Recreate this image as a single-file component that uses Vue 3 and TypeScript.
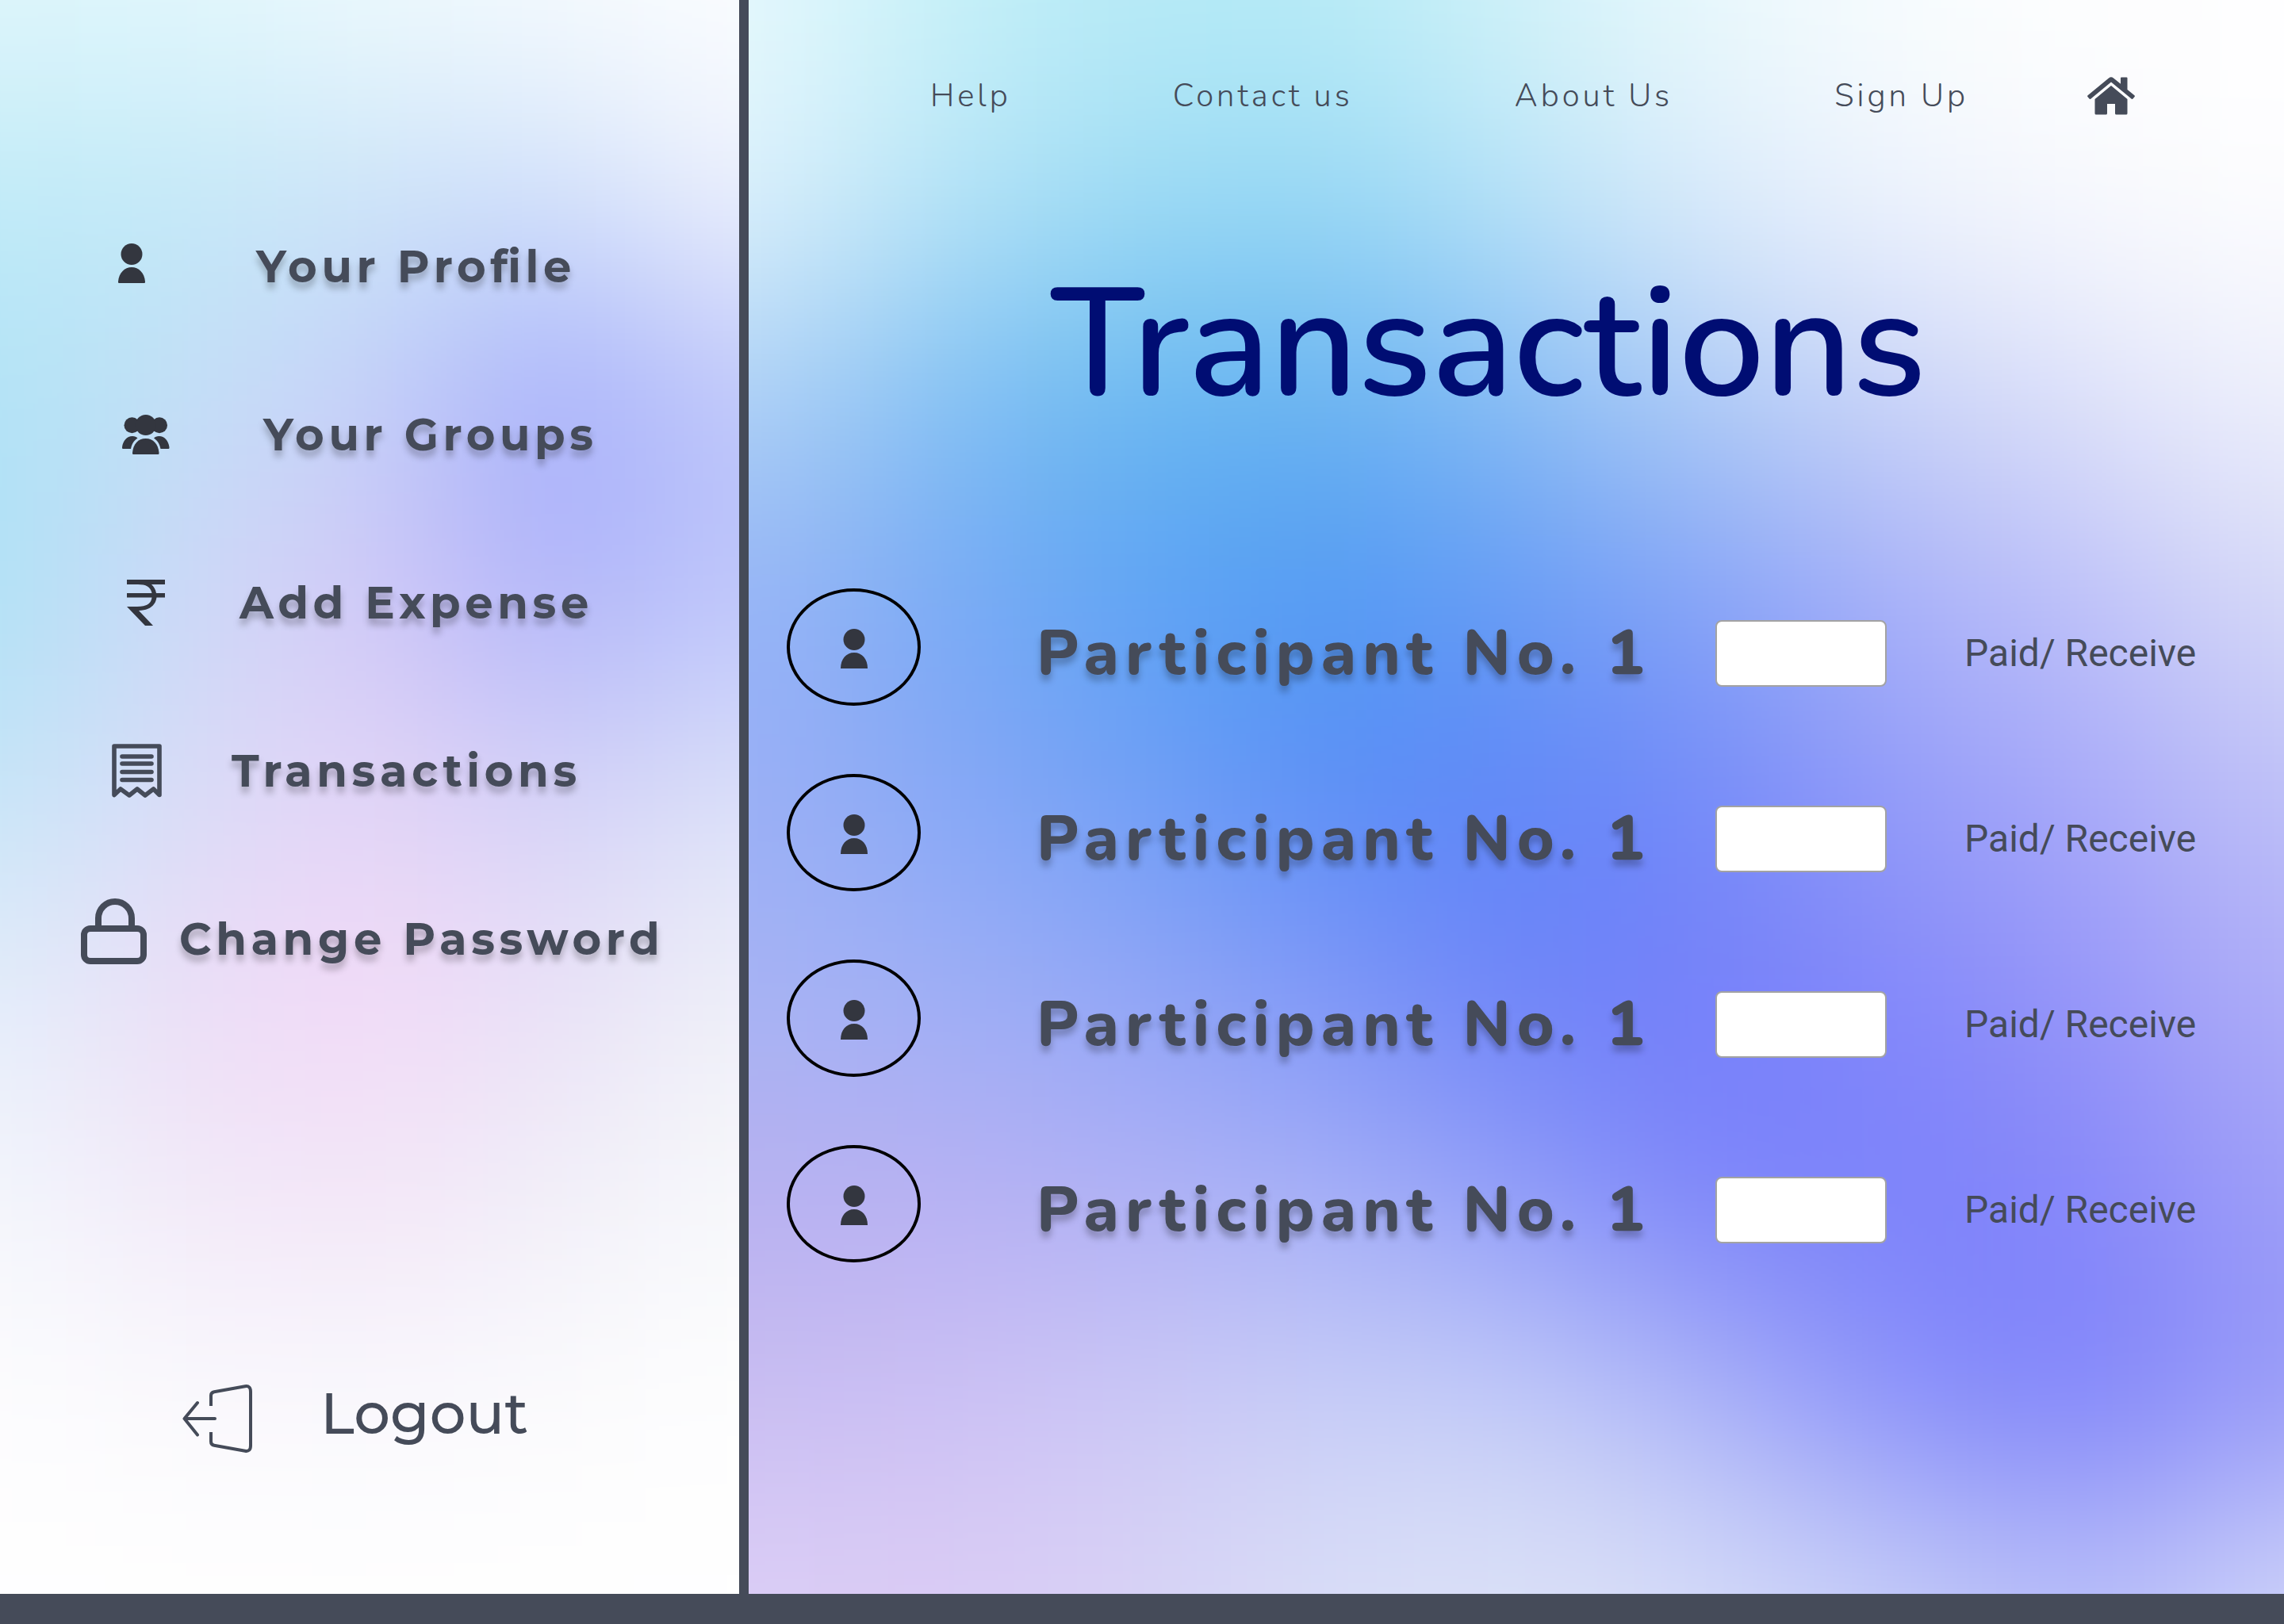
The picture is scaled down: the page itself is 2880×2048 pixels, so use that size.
<script setup lang="ts">
import { computed, ref } from 'vue'

interface MenuItem {
  label: string
  icon: 'person' | 'group' | 'rupee' | 'receipt' | 'lock'
}

interface Participant {
  id: number
  name: string
  amount: string
}

interface Cell {
  key: string
  x: number
  y: number
  width: number
  height: number
  fill: string
}

const menu: MenuItem[] = [
  { label: 'Your Profile', icon: 'person' },
  { label: 'Your Groups', icon: 'group' },
  { label: 'Add Expense', icon: 'rupee' },
  { label: 'Transactions', icon: 'receipt' },
  { label: 'Change Password', icon: 'lock' },
]

const links: string[] = ['Help', 'Contact us', 'About Us', 'Sign Up']

const participants = ref<Participant[]>(
  [1, 2, 3, 4].map((id) => ({ id, name: 'Participant No. 1', amount: '' })),
)

// Colour stops of the two mesh gradients, row by row from the top.
const sideStops: string[] = [
  'dff6fb e2f7fc eefafd f6fbfe fcfeff',
  'bfebf8 c2e9f8 cbe4f8 cfe0fa eef2fc',
  'b0e3f6 c4dff6 c6d0f9 a2abfa bec7fa',
  'aee2f6 ced8f7 d4c8f7 adb2fa bec6fb',
  'c6e6f8 dadcf8 e4d5f6 d4d2f7 dce2f9',
  'e4eefb ecdcf6 f5d9f7 e8e0f6 f0f1f9',
  'f4f7fc f1e9f8 f3e5f7 f0eff8 f8f9fb',
  'fdfdfe faf9fd f9f8fd fbfbfd fefefe',
  'ffffff ffffff ffffff ffffff ffffff',
]

const mainStops: string[] = [
  'e8f9fd c8f2f9 b8ebf7 b8ecf7 d2f3f9 eaf9fc f9fdff fefefe ffffff',
  'e0f2fc b8e5f7 9edcf4 96d8f4 b8e4f8 deecfb f0f5fd fafbfe fefeff',
  'b0d2f6 82c0f2 68b8f1 66b2f1 86bbf4 b0cdf6 c9d3f8 dfe3f9 f0f2fc',
  '98b4f6 7aaaf5 5ea4f4 4f99f3 669cf5 86a4f7 a9b0f9 bfc2f9 d8dbf8',
  '9cb0f6 88a8f6 72a0f6 598ef6 5f86f8 748af9 959df9 a8a9f9 c0c2f8',
  'a8b4f4 9fb0f6 94a7f7 8098f8 6c82f9 767ffb 8488fa 9796f9 b0aff8',
  'b8b0f0 b9b0f2 b0b0f5 a7b0f7 909cf8 7a82fa 7b81fb 8686fa a0a0f9',
  'c8bdf2 ccc0f4 ccc8f6 c8cef8 c4ccf8 acb4f8 868dfa 7c80fa 9699f8',
  'ddd0f6 dcccf5 d9d2f5 dadff7 dee3f7 d8def8 c8cff8 b8bdf9 d3d8fa',
]

// Each stop becomes one cell; the outer cells reach past the edge so the blur stays opaque.
function toCells(stops: string[]): Cell[] {
  const rows = stops.map((row) => row.split(' '))
  const lastY = rows.length - 1
  return rows.flatMap((row, y) => {
    const lastX = row.length - 1
    return row.map((color, x) => {
      const left = x === 0 ? -2 : x - 0.5
      const right = x === lastX ? lastX + 2 : x + 0.52
      const top = y === 0 ? -2 : y - 0.5
      const bottom = y === lastY ? lastY + 2 : y + 0.52
      return { key: `${x}-${y}`, x: left, y: top, width: right - left, height: bottom - top, fill: `#${color}` }
    })
  })
}

const sideCells = computed(() => toCells(sideStops))
const mainCells = computed(() => toCells(mainStops))
</script>

<template>
  <div class="page">
    <div class="columns">
      <aside class="side">
        <svg class="mesh" viewBox="0 0 4 8" preserveAspectRatio="none" aria-hidden="true">
          <defs>
            <filter id="side-blur" filterUnits="userSpaceOnUse" x="-2" y="-2" width="8" height="12" color-interpolation-filters="sRGB">
              <feGaussianBlur stdDeviation="0.5" />
            </filter>
          </defs>
          <g filter="url(#side-blur)">
            <rect v-for="c in sideCells" :key="c.key" :x="c.x" :y="c.y" :width="c.width" :height="c.height" :fill="c.fill" />
          </g>
        </svg>

        <nav class="menu" aria-label="Account">
          <a v-for="item in menu" :key="item.label" href="#" class="menu-link" :class="item.icon">
            <svg v-if="item.icon === 'person'" class="icon" width="34" height="58" viewBox="0 0 34 58" aria-hidden="true">
              <circle cx="17" cy="13.5" r="13.5" />
              <path d="M1 50C0 50 0 49 0 48C1 37 8 30 17 30S33 37 34 48C34 49 34 50 33 50Z" />
            </svg>
            <svg v-else-if="item.icon === 'group'" class="icon" width="60" height="50" viewBox="0 0 60 50" aria-hidden="true">
              <circle cx="12.5" cy="13.2" r="10" />
              <circle cx="47" cy="13.2" r="10" />
              <circle cx="29.8" cy="13" r="13" />
              <path d="M14 50C13 50 13 49 13 48C14 37 20 30 29.700 30S45.500 37 46.500 48C46.500 49 46.500 50 45.500 50Z" />
              <path d="M1 43C0 43 0 42 0 41C1 33 6 27 13 27C16 27 18 28 19.500 29.500C14 33 12 38 11 43Z" />
              <path d="M58.500 43C59.500 43 59.500 42 59.500 41C58.500 33 53.500 27 46.500 27C43.500 27 41.500 28 40 29.500C45.500 33 47.500 38 48.500 43Z" />
            </svg>
            <svg v-else-if="item.icon === 'rupee'" class="icon" width="48" height="58" viewBox="0 0 48 58" aria-hidden="true">
              <path d="M0 0H48V6H31C34 9 36 12 37 17H48V22.500H37.500C36 33 28 38.500 15 39L33 58H23L0 34H13C24 34 30.500 31 31.500 22.500H0V17H31.500C30 9 24 6 14 6H0Z" />
            </svg>
            <svg v-else-if="item.icon === 'receipt'" class="icon line" width="63" height="68" viewBox="0 0 63 68" aria-hidden="true">
              <path stroke-width="5.600" stroke-linejoin="round" d="M3 3H60V64.500L52.500 57L42 65L32 57L22 65L11 57L3 64.500Z" />
              <path stroke-width="5.600" stroke-linecap="round" d="M13 16H50M13 25H50M13 35.500H50M13 45.500H50" />
            </svg>
            <svg v-else class="icon line" width="84" height="102" viewBox="0 0 84 102" aria-hidden="true">
              <path stroke-width="8" d="M22 38V25A21 21 0 0 1 64 25V38" />
              <rect stroke-width="8" x="4" y="38" width="75" height="41" rx="8" />
            </svg>
            <span>{{ item.label }}</span>
          </a>
        </nav>

        <button type="button" class="logout">
          <svg class="icon line" width="88" height="100" viewBox="0 -14 88 100" aria-hidden="true">
            <path stroke-width="4" d="M36 27V14Q36 10 40 9.300L79 2.300Q86 1 86 9V77Q86 85 79 83.700L40 76.700Q36 76 36 72V60" />
            <path stroke-width="4" stroke-linecap="round" stroke-linejoin="round" d="M41 43H3M19 23L2.500 43L19 63.500" />
          </svg>
          <span>Logout</span>
        </button>
      </aside>

      <main class="content">
        <svg class="mesh" viewBox="0 0 8 8" preserveAspectRatio="none" aria-hidden="true">
          <defs>
            <filter id="main-blur" filterUnits="userSpaceOnUse" x="-2" y="-2" width="12" height="12" color-interpolation-filters="sRGB">
              <feGaussianBlur stdDeviation="0.5" />
            </filter>
          </defs>
          <g filter="url(#main-blur)">
            <rect v-for="c in mainCells" :key="c.key" :x="c.x" :y="c.y" :width="c.width" :height="c.height" :fill="c.fill" />
          </g>
        </svg>

        <nav class="topnav" aria-label="Site">
          <a v-for="link in links" :key="link" href="#">{{ link }}</a>
          <a href="#" class="home" aria-label="Home">
            <svg width="60" height="48" viewBox="0 0 60 48" aria-hidden="true">
              <path d="M0.600 23.200L27 1.400Q30 -1 33 1.400L42 8.800V1.500Q42 0.500 43 0.500H49.500Q50.500 0.500 50.500 1.500V16L59.400 23.200Q60.300 24 59.600 25L57.500 27.600Q56.700 28.500 55.800 27.700L30 6.500L4.200 27.700Q3.300 28.500 2.500 27.600L0.400 25Q-0.300 24 0.600 23.200Z" />
              <path d="M30 11L50.500 28V46Q50.500 47.500 49 47.500H36.500Q35 47.500 35 46V34H25V46Q25 47.500 23.500 47.500H11Q9.500 47.500 9.500 46V28Z" />
            </svg>
          </a>
        </nav>

        <h1 class="title">Transactions</h1>

        <ul class="rows">
          <li v-for="p in participants" :key="p.id" class="row">
            <span class="avatar">
              <svg class="icon" width="34" height="50" viewBox="0 0 34 50" aria-hidden="true">
                <circle cx="17" cy="13.5" r="13.5" />
                <path d="M0 50C0 38 7 30 17 30S34 38 34 50Z" />
              </svg>
            </span>
            <label class="name" :for="`amount-${p.id}`">{{ p.name }}</label>
            <input :id="`amount-${p.id}`" v-model="p.amount" class="amount" type="text" inputmode="decimal" />
            <span class="status">Paid/ Receive</span>
          </li>
        </ul>
      </main>
    </div>
    <footer class="bar"></footer>
  </div>
</template>

<style>
body {
  margin: 0;
}
</style>

<style scoped>
.page {
  display: flex;
  flex-direction: column;
  min-height: 100vh;
  color: #454b59;
  font-family: Nunito, Lato, sans-serif;
}

.columns {
  display: grid;
  flex: 1;
  grid-template-columns: 59fr 121fr;
}

.side,
.content {
  position: relative;
  display: flex;
  flex-direction: column;
  isolation: isolate;
}

.side {
  border-right: 12px solid #454b59;
  font-family: Montserrat, Inter, sans-serif;
}

.mesh {
  position: absolute;
  inset: 0;
  z-index: -1;
  width: 100%;
  height: 100%;
  overflow: hidden;
}

a {
  color: inherit;
  text-decoration: none;
}

.icon {
  flex: none;
  fill: #33363f;
}

.icon.line {
  fill: none;
  stroke: #454b59;
}

.menu {
  display: flex;
  flex-direction: column;
  padding-top: 230px;
}

.menu-link {
  display: flex;
  align-items: center;
  height: 212px;
  font-size: 56px;
  font-weight: 700;
  font-feature-settings: "liga" 1;
  letter-spacing: 0.1em;
  white-space: nowrap;
  text-shadow: 0 8px 8px rgb(0 0 0 / 25%);
}

.person {
  gap: 140px;
  padding-left: 149px;
}

.group {
  gap: 118px;
  padding-left: 154px;
}

.rupee {
  gap: 94px;
  padding-left: 160px;
}

.receipt {
  gap: 88px;
  padding-left: 141px;
}

.lock {
  gap: 40px;
  padding-left: 102px;
}

.logout {
  display: flex;
  align-items: center;
  gap: 86px;
  margin: 442px 0 0 230px;
  padding: 0;
  border: 0;
  background: none;
  color: inherit;
  font: 500 72px/86px Montserrat, Inter, sans-serif;
}

.topnav {
  display: flex;
  align-items: center;
  gap: 204px;
  padding: 97px 0 0 229px;
  font-size: 40px;
  font-weight: 300;
  line-height: 48px;
  letter-spacing: 4px;
  white-space: nowrap;
}

.home {
  display: flex;
  margin-left: -54px;
  fill: #454b59;
}

.title {
  margin: 175px 70px 0 0;
  color: #000d73;
  font-size: 192px;
  font-weight: 600;
  line-height: 230px;
  text-align: center;
}

.rows {
  display: flex;
  flex-direction: column;
  gap: 70px;
  margin: 192px 0 0;
  padding: 0 0 0 48px;
  list-style: none;
}

.row {
  display: grid;
  grid-template-columns: 315fr 856fr 314fr 403fr;
  align-items: center;
}

.avatar {
  display: flex;
  align-items: center;
  justify-content: center;
  box-sizing: border-box;
  width: 169px;
  height: 148px;
  margin-bottom: 16px;
  padding-top: 4px;
  border: 4px solid #000;
  border-radius: 50%;
}

.name {
  font-size: 80px;
  font-weight: 800;
  line-height: 96px;
  letter-spacing: 8px;
  white-space: nowrap;
  text-shadow: 0 8px 8px rgb(0 0 0 / 25%);
}

.amount {
  box-sizing: border-box;
  width: 216px;
  height: 84px;
  padding: 0 16px;
  border: 2px solid #a3a3a3;
  border-radius: 8px;
  background: #fff;
  color: inherit;
  font: 40px Roboto, sans-serif;
}

.status {
  font-family: Roboto, sans-serif;
  font-size: 48px;
  line-height: 56px;
  white-space: nowrap;
}

.bar {
  height: 38px;
  background: #454b59;
}
</style>
